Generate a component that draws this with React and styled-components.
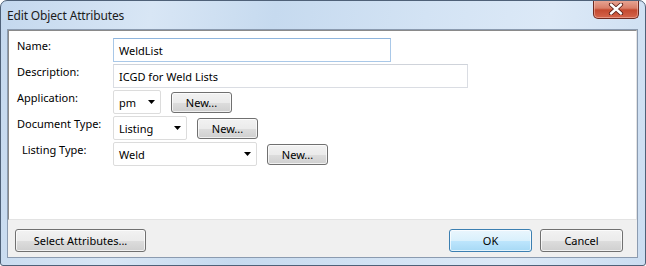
import React from 'react'
import styled, { createGlobalStyle } from 'styled-components'

const GlobalStyle = createGlobalStyle`
  html, body {
    margin: 0;
    padding: 0;
    background: #ffffff;
  }
  body {
    font-family: "Noto Sans", "Open Sans", sans-serif;
    font-size: 11px;
    color: #000;
  }
`

const fields = [
  { label: 'Name:', value: 'WeldList', width: 278, focus: true },
  { label: 'Description:', value: 'ICGD for Weld Lists', width: 355 }
]

const combos = [
  { label: 'Application:', value: 'pm', width: 48 },
  { label: 'Document Type:', value: 'Listing', width: 74 },
  { label: 'Listing Type:', value: 'Weld', width: 144, indent: 5 }
]

const CloseGlyph = () => (
  <svg width='16' height='12' viewBox='0 0 16 12'>
    <path d='M3 1.5 L13 10.5 M13 1.5 L3 10.5' stroke='#5a1f17' strokeWidth='4.2' strokeLinecap='round' />
    <path d='M3 1.5 L13 10.5 M13 1.5 L3 10.5' stroke='#ffffff' strokeWidth='2.4' strokeLinecap='round' />
  </svg>
)

const Caret = () => (
  <svg width='7' height='4' viewBox='0 0 7 4'>
    <path d='M0 0 H7 L3.5 4 Z' fill='#000' />
  </svg>
)

export default function App () {
  return (
    <>
      <GlobalStyle />
      <Window>
        <TitleBar>
          <Title>Edit Object Attributes</Title>
          <CloseButton><CloseGlyph /></CloseButton>
        </TitleBar>
        <Body>
          <Client>
            <Panel>
              {fields.map(f => (
                <Row key={f.label}>
                  <Label>{f.label}</Label>
                  <TextBox $width={f.width} $focus={f.focus}>{f.value}</TextBox>
                </Row>
              ))}
              {combos.map(c => (
                <Row key={c.label}>
                  <Label $indent={c.indent}>{c.label}</Label>
                  <Combo $width={c.width}>
                    <span>{c.value}</span>
                    <Caret />
                  </Combo>
                  <SmallButton>New...</SmallButton>
                </Row>
              ))}
            </Panel>
            <Footer>
              <Button $width={131}>Select Attributes...</Button>
              <Spacer />
              <Button $width={83} $primary>OK</Button>
              <Button $width={83}>Cancel</Button>
            </Footer>
          </Client>
        </Body>
      </Window>
    </>
  )
}

const Window = styled.div`
  width: 646px;
  height: 266px;
  box-sizing: border-box;
  display: flex;
  flex-direction: column;
  border: 1px solid #4f6178;
  border-radius: 7px 7px 3px 3px;
  background: linear-gradient(100deg, #c4d8ee 0%, #d8e6f5 22%, #c6daef 40%, #d3e3f4 62%, #dce9f7 80%, #cbddf1 100%);
  overflow: hidden;
`
const TitleBar = styled.div`
  height: 28px;
  display: flex;
  align-items: flex-start;
  justify-content: space-between;
  padding-left: 6px;
  padding-right: 6px;
`
const Title = styled.div`
  padding-top: 6px;
  font-size: 12px;
  color: #1b1b1b;
  letter-spacing: -0.15px;
`
const CloseButton = styled.div`
  width: 44px;
  height: 18px;
  margin-top: -1px;
  display: flex;
  align-items: center;
  justify-content: center;
  border: 1px solid #6e2a20;
  border-top: 0;
  border-radius: 0 0 5px 5px;
  background: linear-gradient(#e8a897 0%, #d97f69 45%, #c44a30 55%, #d5654c 100%);
  box-shadow: inset 0 0 0 1px rgba(255, 210, 200, 0.45);
`
const Body = styled.div`
  flex: 1;
  display: flex;
  padding: 0 7px 7px 6px;
`
const Client = styled.div`
  flex: 1;
  display: flex;
  flex-direction: column;
  background: #f0f0f0;
  border: 1px solid #8b9bb0;
`
const Panel = styled.div`
  height: 190px;
  box-sizing: border-box;
  background: #fff;
  border-top: 1px solid #8a8a8a;
  border-left: 1px solid #8a8a8a;
  border-right: 1px solid #e3e3e3;
  border-bottom: 1px solid #e3e3e3;
  padding: 7px 0 0 8px;
  display: flex;
  flex-direction: column;
  gap: 2px;
`
const Row = styled.div`
  display: flex;
  align-items: center;
  height: 24px;
`
const Label = styled.div`
  width: ${p => 96 - (p.$indent || 0)}px;
  padding-left: ${p => p.$indent || 0}px;
  align-self: flex-start;
  line-height: 15px;
  color: #000;
`
const TextBox = styled.div`
  width: ${p => p.$width}px;
  height: 24px;
  box-sizing: border-box;
  padding-left: 5px;
  display: flex;
  align-items: center;
  background: #fff;
  border: 1px solid ${p => (p.$focus ? '#a9c8e8' : '#dadde3')};
  border-top-color: ${p => (p.$focus ? '#8fb5dd' : '#cfd3da')};
`
const Combo = styled.div`
  width: ${p => p.$width}px;
  height: 24px;
  box-sizing: border-box;
  padding: 0 5px 0 5px;
  display: flex;
  align-items: center;
  justify-content: space-between;
  background: #fff;
  border: 1px solid #dcdcdc;
  border-radius: 2px;
`
const buttonBase = `
  box-sizing: border-box;
  display: flex;
  align-items: center;
  justify-content: center;
  border: 1px solid #707070;
  border-radius: 3px;
  color: #000;
  box-shadow: inset 0 0 0 1px rgba(255, 255, 255, 0.7);
`
const SmallButton = styled.div`
  ${buttonBase}
  width: 61px;
  height: 21px;
  margin-left: 10px;
  background: linear-gradient(#f2f2f2 0%, #ebebeb 50%, #dddddd 51%, #cfcfcf 100%);
`
const Footer = styled.div`
  flex: 1;
  display: flex;
  align-items: flex-start;
  gap: 8px;
  padding: 9px 14px 0 7px;
`
const Spacer = styled.div`
  flex: 1;
`
const Button = styled.div`
  ${buttonBase}
  width: ${p => p.$width}px;
  height: 23px;
  border-color: ${p => (p.$primary ? '#3c7fb1' : '#707070')};
  background: ${p => (p.$primary
    ? 'linear-gradient(#eaf6fd 0%, #d9f0fc 50%, #bee6fd 51%, #a7d9f5 100%)'
    : 'linear-gradient(#f2f2f2 0%, #ebebeb 50%, #dddddd 51%, #cfcfcf 100%)')};
`
